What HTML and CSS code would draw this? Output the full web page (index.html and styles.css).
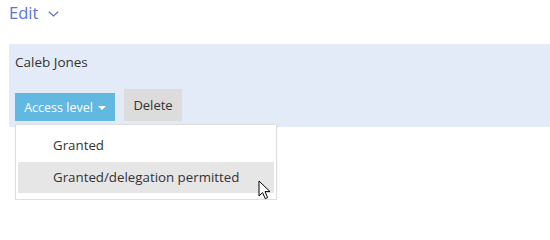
FILE: index.html
```html
<!DOCTYPE html>
<html>
<head>
<meta charset="utf-8">
<link rel="stylesheet" href="styles.css">
</head>
<body>
<div class="header">
  <span class="edit">Edit</span>
  <svg class="chev" width="11" height="6" viewBox="0 0 11 6"><path d="M0.8 0.8 L5.5 5 L10.2 0.8" fill="none" stroke="#5b72d8" stroke-width="1.3"/></svg>
</div>
<div class="panel">
  <div class="name">Caleb Jones</div>
  <div class="actions">
    <button class="btn access">Access level <span class="caret"></span></button>
    <button class="btn delete">Delete</button>
  </div>
</div>
<div class="menu">
  <div class="item">Granted</div>
  <div class="item hover">Granted/delegation permitted</div>
  <svg class="cursor" width="14" height="20" viewBox="0 0 14 20"><path d="M1 1 L1 16 L4.6 12.6 L7.2 18.6 L9.6 17.6 L7 11.6 L12 11.6 Z" fill="#fff" stroke="#000" stroke-width="1" stroke-linejoin="round"/></svg>
</div>
</body>
</html>
```

FILE: styles.css
```css
html, body {
  margin: 0;
  padding: 0;
  background: #fff;
  font-family: "Open Sans", "Noto Sans", sans-serif;
}
.header {
  display: flex;
  align-items: center;
  gap: 10px;
  padding: 0 0 0 9px;
  height: 26px;
}
.edit {
  font-size: 16.5px;
  color: #5b72d8;
  line-height: 22px;
}
.chev {
  margin-top: 1px;
}
.panel {
  margin: 18px 0 0 9px;
  height: 83px;
  background: #e3ebf9;
  padding: 0 0 0 6px;
  box-sizing: border-box;
}
.name {
  font-size: 13.5px;
  color: #333;
  padding-top: 8px;
  line-height: 20px;
}
.actions {
  display: flex;
  align-items: flex-end;
  gap: 9px;
  margin-top: 17px;
}
.btn {
  border: none;
  font-family: "Open Sans", "Noto Sans", sans-serif;
  font-size: 13px;
  margin: 0;
  cursor: default;
}
.access {
  width: 100px;
  height: 28px;
  background: #61b8e0;
  color: #fff;
  padding: 0;
  display: flex;
  align-items: center;
  justify-content: center;
  gap: 5px;
  font-size: 12.5px;
}
.caret {
  display: inline-block;
  width: 0;
  height: 0;
  border-left: 4px solid transparent;
  border-right: 4px solid transparent;
  border-top: 4px solid #fff;
  margin-top: 1px;
}
.delete {
  width: 58px;
  height: 32px;
  background: #dcdcdc;
  color: #333;
  padding: 0;
}
.menu {
  position: relative;
  margin: -3px 0 0 15px;
  width: 262px;
  box-sizing: border-box;
  background: #fff;
  border: 1px solid #dedede;
  box-shadow: 0 1px 3px rgba(0,0,0,0.08);
  padding: 5px 2px 6px 2px;
}
.item {
  height: 31px;
  line-height: 31px;
  padding-left: 35px;
  font-size: 13.3px;
  color: #333;
  margin-bottom: 1px;
}
.item.hover {
  background: #e6e6e6;
  margin-bottom: 0;
}
.cursor {
  position: absolute;
  left: 242px;
  top: 55px;
}
```
